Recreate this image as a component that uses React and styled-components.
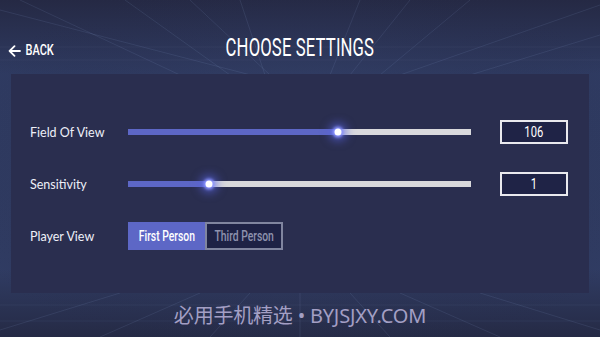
import React from "react";
import styled, { createGlobalStyle } from "styled-components";

const GlobalStyle = createGlobalStyle`
  html, body { margin: 0; padding: 0; background: #262a48; }
  * { box-sizing: border-box; }
`;

const settings = [
  { label: "Field Of View", value: 106, pct: 61.2 },
  { label: "Sensitivity", value: 1, pct: 23.6 },
];

function GridLines() {
  return (
    <Lines viewBox="0 0 600 337" preserveAspectRatio="none">
      <defs>
        <radialGradient id="glow" cx="50%" cy="50%" r="60%">
          <stop offset="0%" stopColor="#3b4c78" stopOpacity="0.9" />
          <stop offset="100%" stopColor="#262a48" stopOpacity="0" />
        </radialGradient>
      </defs>
      <rect x="0" y="0" width="600" height="337" fill="url(#glow)" />
      <g stroke="#8ea0d0" strokeOpacity="0.13" strokeWidth="1" fill="none">
        <line x1="0" y1="10" x2="270" y2="80" />
        <line x1="20" y1="0" x2="180" y2="75" />
        <line x1="125" y1="0" x2="230" y2="75" />
        <line x1="190" y1="0" x2="270" y2="75" />
        <line x1="240" y1="0" x2="265" y2="75" />
        <line x1="360" y1="0" x2="330" y2="75" />
        <line x1="410" y1="0" x2="350" y2="75" />
        <line x1="470" y1="0" x2="380" y2="75" />
        <line x1="600" y1="5" x2="400" y2="75" />
        <line x1="600" y1="35" x2="470" y2="75" />
        <line x1="0" y1="47" x2="600" y2="47" strokeOpacity="0.07" />
        <line x1="0" y1="60" x2="600" y2="60" strokeOpacity="0.07" />
        <line x1="0" y1="305" x2="600" y2="305" strokeOpacity="0.08" />
        <line x1="0" y1="321" x2="600" y2="321" strokeOpacity="0.08" />
        <line x1="200" y1="293" x2="100" y2="337" />
        <line x1="250" y1="293" x2="210" y2="337" />
        <line x1="300" y1="293" x2="300" y2="337" />
        <line x1="350" y1="293" x2="390" y2="337" />
        <line x1="400" y1="293" x2="500" y2="337" />
        <line x1="120" y1="293" x2="0" y2="330" />
        <line x1="480" y1="293" x2="600" y2="330" />
      </g>
    </Lines>
  );
}

export default function App() {
  return (
    <>
      <GlobalStyle />
      <Page>
        <GridLines />
        <Header>
          <Back>
            <svg width="13" height="12" viewBox="0 0 13 12">
              <path d="M12 6H1.8M6.5 1.2L1.6 6L6.5 10.8" stroke="#fff" strokeWidth="1.8" fill="none" strokeLinecap="round" strokeLinejoin="round" />
            </svg>
            <Narrow $scale={0.76}>BACK</Narrow>
          </Back>
          <Title>
            <Narrow $scale={0.63}>CHOOSE SETTINGS</Narrow>
          </Title>
        </Header>
        <Panel>
          {settings.map((s) => (
            <Row key={s.label}>
              <Label>{s.label}</Label>
              <Track>
                <Fill style={{ width: `${s.pct}%` }} />
                <Thumb style={{ left: `${s.pct}%` }} />
              </Track>
              <ValueBox>
                <Narrow $scale={0.8}>{s.value}</Narrow>
              </ValueBox>
            </Row>
          ))}
          <Row>
            <Label>Player View</Label>
            <Toggle>
              <ToggleButton $active>
                <Narrow $scale={0.74}>First Person</Narrow>
              </ToggleButton>
              <ToggleButton>
                <Narrow $scale={0.74}>Third Person</Narrow>
              </ToggleButton>
            </Toggle>
          </Row>
        </Panel>
        <Watermark>必用手机精选 • BYJSJXY.COM</Watermark>
      </Page>
    </>
  );
}

const Page = styled.div`
  position: relative;
  width: 600px;
  height: 337px;
  overflow: hidden;
  background: linear-gradient(180deg, #252944 0%, #2f3b62 22%, #303c63 80%, #252a45 100%);
  display: flex;
  flex-direction: column;
`;

const Lines = styled.svg`
  position: absolute;
  inset: 0;
  width: 100%;
  height: 100%;
  pointer-events: none;
`;

const Narrow = styled.span`
  display: inline-block;
  transform: scaleX(${(p) => p.$scale});
  white-space: nowrap;
`;

const Header = styled.div`
  position: relative;
  height: 74px;
  display: flex;
  align-items: center;
  justify-content: center;
  padding-top: 20px;
`;

const Back = styled.div`
  position: absolute;
  left: 8px;
  top: 42px;
  display: flex;
  align-items: center;
  color: #fff;
  font-family: Roboto, sans-serif;
  font-size: 14.5px;
  font-weight: 500;
  svg { margin-right: 0px; }
`;

const Title = styled.h1`
  margin: 0;
  color: #fff;
  font-family: Roboto, sans-serif;
  font-weight: 400;
  font-size: 26.5px;
  line-height: 1;
  letter-spacing: 0.2px;
`;

const Panel = styled.div`
  position: relative;
  margin: 0 11px;
  height: 219px;
  background: #2a2e4f;
  padding: 32px 21px 0 19px;
  display: flex;
  flex-direction: column;
`;

const Row = styled.div`
  height: 52px;
  display: flex;
  align-items: center;
`;

const Label = styled.div`
  width: 98px;
  color: #eef0f8;
  font-family: Lato, sans-serif;
  font-size: 12.5px;
`;

const Track = styled.div`
  position: relative;
  width: 343px;
  height: 6px;
  background: #d9d9dc;
  margin-right: 29px;
`;

const Fill = styled.div`
  position: absolute;
  left: 0;
  top: 0;
  bottom: 0;
  background: #5d67c6;
`;

const Thumb = styled.div`
  position: absolute;
  top: 50%;
  width: 7px;
  height: 7px;
  border-radius: 50%;
  background: #fff;
  transform: translate(-50%, -50%);
  box-shadow: 0 0 3px 2px #8c95ff, 0 0 9px 6px rgba(90, 100, 230, 0.55);
`;

const ValueBox = styled.div`
  width: 68px;
  height: 24px;
  border: 2px solid #e9e9ee;
  background: #1f2346;
  color: #fff;
  font-family: Roboto, sans-serif;
  font-size: 14px;
  display: flex;
  align-items: center;
  justify-content: center;
`;

const Toggle = styled.div`
  display: flex;
`;

const ToggleButton = styled.div`
  width: ${(p) => (p.$active ? "77px" : "78px")};
  height: 28px;
  display: flex;
  align-items: center;
  justify-content: center;
  font-family: Roboto, sans-serif;
  font-weight: 500;
  font-size: 14px;
  background: ${(p) => (p.$active ? "#5d67c6" : "#1e2245")};
  color: ${(p) => (p.$active ? "#fff" : "#8e92ae")};
  border: 2px solid ${(p) => (p.$active ? "#5d67c6" : "#80859f")};
`;

const Watermark = styled.div`
  position: relative;
  flex: 1;
  display: flex;
  align-items: center;
  justify-content: center;
  padding-bottom: 2px;
  color: #a39fc4;
  font-family: "Noto Sans", "Noto Sans CJK SC", sans-serif;
  font-size: 20px;
  letter-spacing: -0.2px;
`;
